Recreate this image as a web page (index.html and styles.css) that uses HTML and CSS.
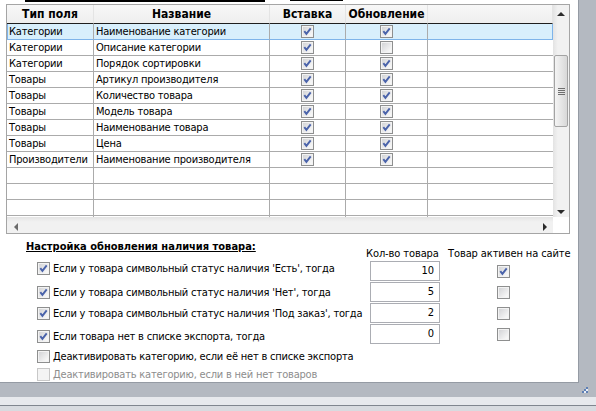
FILE: index.html
```html
<!DOCTYPE html>
<html lang="ru">
<head>
<meta charset="utf-8">
<title>Настройка обновления</title>
<link rel="stylesheet" href="styles.css">
</head>
<body>
<svg width="0" height="0" class="defs">
  <symbol id="chk" viewBox="0 0 11 11"><path d="M2.3 5.2 L4.4 7.9 L8.7 2.4"/></symbol>
</svg>
<div class="main">
  <div class="panel">
    <div class="topline"><span class="seg1"></span><span class="seg2"></span></div>
    <div class="grid">
      <div class="grid-main">
        <div class="table">
          <div class="row head">
            <div class="c">Тип поля</div>
            <div class="c">Название</div>
            <div class="c">Вставка</div>
            <div class="c">Обновление</div>
            <div class="c"></div>
          </div>
          <div class="row sel">
            <div class="c">Категории</div><div class="c">Наименование категории</div>
            <div class="c k"><span class="cb"><svg><use href="#chk"/></svg></span></div>
            <div class="c k"><span class="cb"><svg><use href="#chk"/></svg></span></div><div class="c"></div>
          </div>
          <div class="row">
            <div class="c">Категории</div><div class="c">Описание категории</div>
            <div class="c k"><span class="cb"><svg><use href="#chk"/></svg></span></div>
            <div class="c k"><span class="cb"></span></div><div class="c"></div>
          </div>
          <div class="row">
            <div class="c">Категории</div><div class="c">Порядок сортировки</div>
            <div class="c k"><span class="cb"><svg><use href="#chk"/></svg></span></div>
            <div class="c k"><span class="cb"><svg><use href="#chk"/></svg></span></div><div class="c"></div>
          </div>
          <div class="row">
            <div class="c">Товары</div><div class="c">Артикул производителя</div>
            <div class="c k"><span class="cb"><svg><use href="#chk"/></svg></span></div>
            <div class="c k"><span class="cb"><svg><use href="#chk"/></svg></span></div><div class="c"></div>
          </div>
          <div class="row">
            <div class="c">Товары</div><div class="c">Количество товара</div>
            <div class="c k"><span class="cb"><svg><use href="#chk"/></svg></span></div>
            <div class="c k"><span class="cb"><svg><use href="#chk"/></svg></span></div><div class="c"></div>
          </div>
          <div class="row">
            <div class="c">Товары</div><div class="c">Модель товара</div>
            <div class="c k"><span class="cb"><svg><use href="#chk"/></svg></span></div>
            <div class="c k"><span class="cb"><svg><use href="#chk"/></svg></span></div><div class="c"></div>
          </div>
          <div class="row">
            <div class="c">Товары</div><div class="c">Наименование товара</div>
            <div class="c k"><span class="cb"><svg><use href="#chk"/></svg></span></div>
            <div class="c k"><span class="cb"><svg><use href="#chk"/></svg></span></div><div class="c"></div>
          </div>
          <div class="row">
            <div class="c">Товары</div><div class="c">Цена</div>
            <div class="c k"><span class="cb"><svg><use href="#chk"/></svg></span></div>
            <div class="c k"><span class="cb"><svg><use href="#chk"/></svg></span></div><div class="c"></div>
          </div>
          <div class="row">
            <div class="c">Производители</div><div class="c">Наименование производителя</div>
            <div class="c k"><span class="cb"><svg><use href="#chk"/></svg></span></div>
            <div class="c k"><span class="cb"><svg><use href="#chk"/></svg></span></div><div class="c"></div>
          </div>
          <div class="row"><div class="c"></div><div class="c"></div><div class="c"></div><div class="c"></div><div class="c"></div></div>
          <div class="row"><div class="c"></div><div class="c"></div><div class="c"></div><div class="c"></div><div class="c"></div></div>
          <div class="row"><div class="c"></div><div class="c"></div><div class="c"></div><div class="c"></div><div class="c"></div></div>
          <div class="row"><div class="c"></div><div class="c"></div><div class="c"></div><div class="c"></div><div class="c"></div></div>
        </div>
        <div class="vscroll">
          <div class="arr up"><span class="tri-up"></span></div>
          <div class="track"><div class="thumb"><span class="grip"></span></div></div>
          <div class="arr down"><span class="tri-down"></span></div>
        </div>
      </div>
      <div class="grid-bottom">
        <div class="hscroll"><span class="tri-left"></span><span class="tri-right"></span></div>
        <div class="corner"></div>
      </div>
    </div>
    <div class="settings">
      <div class="opts">
        <div class="title">Настройка обновления наличия товара:</div>
        <div class="opt"><span class="cb"><svg><use href="#chk"/></svg></span><span>Если у товара символьный статус наличия 'Есть', тогда</span></div>
        <div class="opt"><span class="cb"><svg><use href="#chk"/></svg></span><span>Если у товара символьный статус наличия 'Нет', тогда</span></div>
        <div class="opt"><span class="cb"><svg><use href="#chk"/></svg></span><span>Если у товара символьный статус наличия 'Под заказ', тогда</span></div>
        <div class="opt"><span class="cb"><svg><use href="#chk"/></svg></span><span>Если товара нет в списке экспорта, тогда</span></div>
        <div class="opt"><span class="cb"></span><span>Деактивировать категорию, если её нет в списке экспорта</span></div>
        <div class="opt dis"><span class="cb"></span><span>Деактивировать категорию, если в ней нет товаров</span></div>
      </div>
      <div class="vals">
        <div class="vhead">Кол-во товара</div>
        <div class="vhead">Товар активен на сайте</div>
        <div class="tb">10</div><span class="cb vcb"><svg><use href="#chk"/></svg></span>
        <div class="tb">5</div><span class="cb vcb"></span>
        <div class="tb">2</div><span class="cb vcb"></span>
        <div class="tb">0</div><span class="cb vcb"></span>
      </div>
    </div>
  </div>
  <div class="side"></div>
</div>
<div class="status">
  <svg class="grip-r" width="6" height="6" viewBox="0 0 6 6">
    <rect x="4" y="0" width="2" height="2" fill="#5d7fb5"/>
    <rect x="2" y="2" width="2" height="2" fill="#5d7fb5"/>
    <rect x="4" y="2" width="2" height="2" fill="#e8eef8"/>
    <rect x="0" y="4" width="2" height="2" fill="#5d7fb5"/>
    <rect x="2" y="4" width="2" height="2" fill="#e8eef8"/>
    <rect x="4" y="4" width="2" height="2" fill="#5d7fb5"/>
  </svg>
</div>
<div class="band1"></div>
<div class="line"></div>
<div class="band2"></div>
</body>
</html>
```
FILE: styles.css
```css
body {
  margin: 0;
  width: 596px;
  height: 411px;
  overflow: hidden;
  font-family: "DejaVu Sans Condensed", "DejaVu Sans", sans-serif;
  font-size: 11px;
  color: #000;
  background: #d9dce1;
}
.defs { position: absolute; }
.defs path, .cb path { fill: none; stroke: #4a63aa; stroke-width: 1.9; stroke-linecap: butt; stroke-linejoin: miter; }

.main { display: flex; height: 383px; background: #b4b9c1; }
.panel {
  width: 579px;
  height: 383px;
  box-sizing: border-box;
  background: #fff;
  border-right: 1px solid #959ba4;
  border-bottom: 1px solid #959ba4;
  display: flex;
  flex-direction: column;
}
.side { flex: 1; }

.topline { height: 4px; display: flex; align-items: flex-start; }
.seg1 { margin-left: 25px; width: 240px; height: 2px; background: #000; }
.seg2 { margin-left: 25px; width: 53px; height: 1px; background: #000; }

.grid {
  margin-left: 6px;
  width: 564px;
  height: 230px;
  box-sizing: border-box;
  border: 1px solid #a5a5a5;
  display: flex;
  flex-direction: column;
}
.grid-main { display: flex; height: 212px; }
.table { width: 546px; overflow: hidden; }
.row {
  display: grid;
  grid-template-columns: 87px 176px 76px 82px 125px;
  height: 16px;
}
.c {
  box-sizing: border-box;
  border-right: 1px solid #ababab;
  border-bottom: 1px solid #ababab;
  padding-left: 2px;
  line-height: 15px;
  letter-spacing: -0.2px;
  white-space: nowrap;
  overflow: hidden;
}
.c:last-child { border-right: none; }
.k { display: flex; justify-content: center; padding: 1px 0 0 0; align-items: flex-start; }
.head { height: 19px; }
.head .c {
  font-weight: bold;
  font-size: 12px;
  line-height: 18px;
  letter-spacing: 0;
  text-align: center;
  padding: 0;
  background: linear-gradient(#f7f7f7, #eeeeee);
  border-right: 1px solid #e4e4e4;
  border-bottom: 1px solid #1e1e1e;
}
.sel .c { background: #d8effc; border-bottom-color: #7eb4ea; }
.sel .c:first-child { box-shadow: inset 1px 0 #7eb4ea; }
.sel .c:last-child { box-shadow: inset -1px 0 #7eb4ea; }

.vscroll {
  width: 16px;
  display: flex;
  flex-direction: column;
  background: linear-gradient(to right, #e3e3e3, #f1f1f1 30%, #f1f1f1);
}
.arr { height: 17px; display: flex; justify-content: center; }
.up { align-items: flex-start; }
.up .tri-up { margin-top: 7px; }
.down { align-items: flex-end; }
.down .tri-down { margin-bottom: 3px; }
.track { flex: 1; }
.thumb {
  margin: 33px 1px 0 1px;
  height: 72px;
  box-sizing: border-box;
  border: 1px solid #a3a3a3;
  border-radius: 2px;
  background: linear-gradient(to right, #f4f4f4, #e6e6e6 50%, #d8d8d8);
  display: flex;
  align-items: center;
  justify-content: center;
}
.grip {
  width: 7px;
  height: 7px;
  background: repeating-linear-gradient(to bottom, #6f6f6f 0, #6f6f6f 1px, transparent 1px, transparent 2px);
}
.tri-up { width: 0; height: 0; border-left: 4px solid transparent; border-right: 4px solid transparent; border-bottom: 4px solid #2b2b2b; }
.tri-down { width: 0; height: 0; border-left: 4px solid transparent; border-right: 4px solid transparent; border-top: 4px solid #2b2b2b; }
.tri-left { width: 0; height: 0; border-top: 4px solid transparent; border-bottom: 4px solid transparent; border-right: 4px solid #6b6b6b; }
.tri-right { width: 0; height: 0; border-top: 4px solid transparent; border-bottom: 4px solid transparent; border-left: 4px solid #2b2b2b; }

.grid-bottom { display: flex; height: 16px; }
.hscroll {
  width: 546px;
  display: flex;
  align-items: center;
  justify-content: space-between;
  padding: 3px 6px 0 7px;
  box-sizing: border-box;
  background: linear-gradient(#e4e4e4, #f1f1f1 30%, #f1f1f1);
}
.corner { flex: 1; background: #fff; }

.cb {
  display: inline-block;
  flex: none;
  width: 13px;
  height: 13px;
  box-sizing: border-box;
  border: 1px solid #8e8f8f;
  background: linear-gradient(135deg, #cfd0d3, #f6f6f6 80%);
  box-shadow: inset 0 0 0 1px #f3f3f3;
}
.cb svg { display: block; width: 11px; height: 11px; }

.settings { display: flex; flex: 1; }
.opts { width: 366px; padding-left: 26px; box-sizing: border-box; }
.title {
  margin-top: 6px;
  height: 13px;
  line-height: 13px;
  font-weight: bold;
  text-decoration: underline;
  white-space: nowrap;
}
.opt {
  display: flex;
  align-items: center;
  gap: 3px;
  height: 13px;
  margin-left: 11px;
  letter-spacing: -0.2px;
  white-space: nowrap;
}
.opt:nth-child(2) { margin-top: 9px; }
.opt:nth-child(3) { margin-top: 11px; }
.opt:nth-child(4) { margin-top: 8px; }
.opt:nth-child(5) { margin-top: 10px; }
.opt:nth-child(6) { margin-top: 7px; }
.opt:nth-child(7) { margin-top: 5px; }
.opt.dis { color: #8d8d8d; }
.opt.dis .cb { border-color: #c8c8c8; background: #f4f4f4; box-shadow: none; }

.vals {
  display: grid;
  grid-template-columns: 82px 130px;
  grid-template-rows: 13px repeat(4, 20px);
  row-gap: 1px;
  margin-top: 13px;
  align-content: start;
}
.vhead { line-height: 13px; white-space: nowrap; letter-spacing: -0.1px; }
.tb {
  margin-left: 4px;
  width: 70px;
  height: 20px;
  box-sizing: border-box;
  border: 1px solid #abadb3;
  text-align: right;
  padding-right: 5px;
  line-height: 18px;
}
.vcb { align-self: center; margin-left: 49px; }

.status {
  height: 14px;
  background: #b4b9c1;
  display: flex;
  justify-content: flex-end;
  align-items: flex-start;
  padding: 4px 8px 0 0;
  box-sizing: border-box;
}
.grip-r { display: block; }
.band1 { height: 8px; background: #e7e9ed; }
.line { height: 1px; background: #80868f; }
.band2 { height: 5px; background: #d8dbe0; }
```
